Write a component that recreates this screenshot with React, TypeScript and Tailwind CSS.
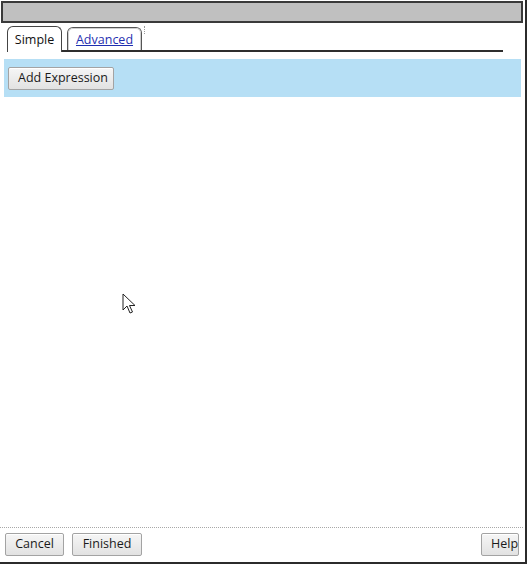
import React from "react";

const btn =
  "h-[23px] whitespace-nowrap rounded-[2px] border border-[#a3a3a3] bg-gradient-to-b from-[#f6f6f6] to-[#e2e2e2] px-[9px] text-[12.5px] leading-none text-[#1a1a1a] shadow-[inset_0_1px_0_#ffffff]";

function Cursor() {
  return (
    <svg
      className="absolute left-[122px] top-[293px]"
      width="14"
      height="23"
      viewBox="0 0 14 23"
    >
      <path
        d="M1 1 L1 17 L5 13 L8 20 L10.5 19 L7.5 12.5 L13 12.5 Z"
        fill="#ffffff"
        stroke="#222222"
        strokeWidth="1"
        strokeLinejoin="round"
      />
    </svg>
  );
}

export default function App() {
  return (
    <div
      className="relative flex h-[564px] w-[527px] flex-col border-r-2 border-b-2 border-[#2b2b2b] bg-white"
      style={{ fontFamily: '"Open Sans", "DejaVu Sans", sans-serif' }}
    >
      {/* title bar */}
      <div className="mx-[1px] mt-[1px] h-[22px] w-[522px] border-2 border-[#3a3a3a] bg-[#c0c0c0]" />

      {/* tabs */}
      <div className="ml-[7px] mt-[3px] flex h-[26px] w-[496px] items-end border-b-2 border-[#2e2e2e]">
        <div className="-mb-[2px] flex h-[26px] w-[55px] items-center justify-center rounded-t-[6px] border-x border-t border-[#444] bg-white pt-[2px] text-[12.5px] text-[#111]">
          Simple
        </div>
        <div className="ml-[5px] flex h-[23px] w-[75px] items-center justify-center rounded-t-[6px] border-x border-t border-[#555] bg-white">
          <div className="flex h-full w-full items-center justify-center rounded-t-[5px] border-x border-t border-[#cfcfcf] pt-[2px]">
            <span className="text-[12.5px] text-[#1f2fb0] underline">Advanced</span>
          </div>
        </div>
        <div className="mb-[16px] ml-[2px] h-[8px] border-l border-dotted border-[#9a9a9a]" />
      </div>

      {/* expression bar */}
      <div className="ml-[4px] mt-[7px] flex h-[38px] w-[517px] items-center bg-[#b6dff5] pl-[4px]">
        <button className={btn + " w-[106px] px-0"}>Add Expression</button>
      </div>

      <div className="flex-1" />

      {/* footer */}
      <div className="w-[523px] border-t border-dotted border-[#a8a8a8]" />
      <div className="flex items-center px-[5px] pt-[5px] pb-[6px]">
        <button className={btn + " w-[59px]"}>Cancel</button>
        <button className={btn + " ml-[8px] w-[70px]"}>Finished</button>
        <div className="flex-1" />
        <button className={btn + " mr-[1px] w-[38px] px-0"}>Help</button>
      </div>

      <Cursor />
    </div>
  );
}
